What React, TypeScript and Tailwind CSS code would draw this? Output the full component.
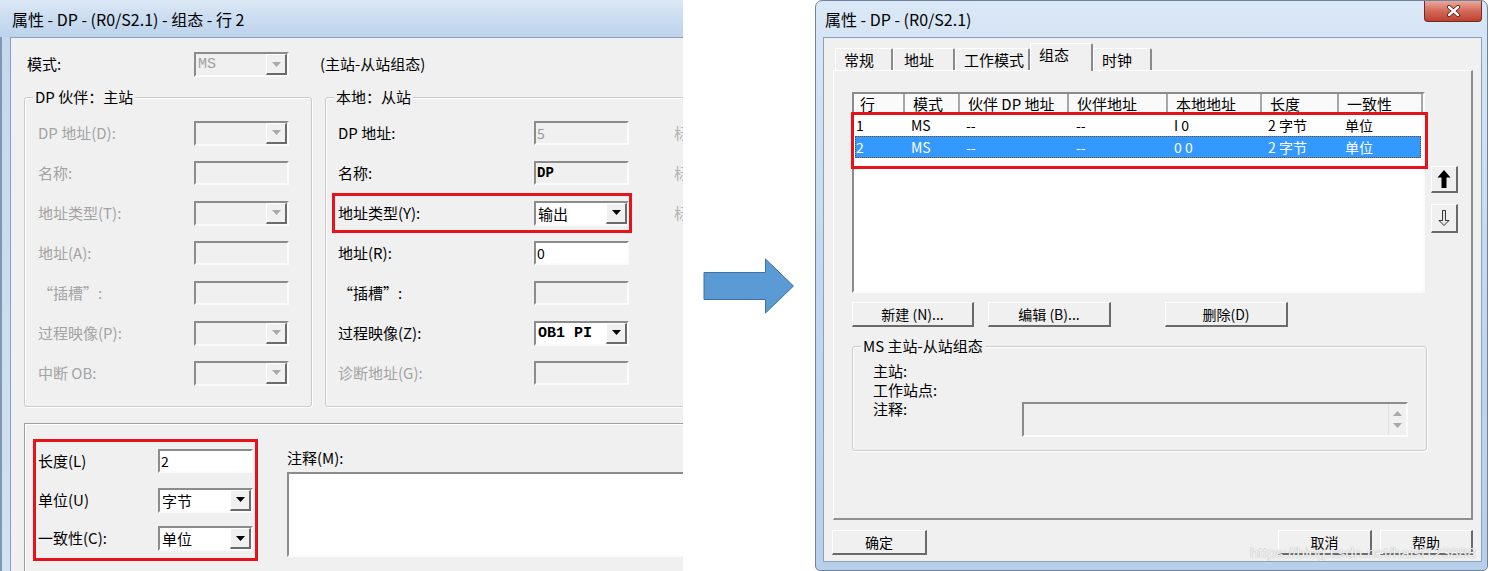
import clsx from 'clsx';

interface Field {
  label: string;
  kind: 'edit' | 'combo';
  value?: string;
  on?: boolean;
  mono?: boolean;
  dimText?: boolean;
  mark?: boolean;
  side?: boolean;
  dimLabel?: boolean;
}

const sunken =
  'border-2 border-t-[#8c8c8c] border-l-[#8c8c8c] border-r-[#fbfbfb] border-b-[#fbfbfb]';
const raised =
  'border-t border-l border-r-2 border-b-2 border-t-white border-l-white border-r-[#6a6a6a] border-b-[#6a6a6a] bg-[#f0f0f0]';
const red = 'border-[#e5141b]';

const partnerFields: Field[] = [
  { label: 'DP 地址(D):', kind: 'combo' },
  { label: '名称:', kind: 'edit' },
  { label: '地址类型(T):', kind: 'combo' },
  { label: '地址(A):', kind: 'edit' },
  { label: '“插槽”:', kind: 'edit' },
  { label: '过程映像(P):', kind: 'combo' },
  { label: '中断 OB:', kind: 'combo' },
];

const localFields: Field[] = [
  { label: 'DP 地址:', kind: 'edit', value: '5', dimText: true, side: true },
  { label: '名称:', kind: 'edit', value: 'DP', mono: true, side: true },
  { label: '地址类型(Y):', kind: 'combo', value: '输出', on: true, mark: true, side: true },
  { label: '地址(R):', kind: 'edit', value: '0', on: true },
  { label: '“插槽”:', kind: 'edit' },
  { label: '过程映像(Z):', kind: 'combo', value: 'OB1 PI', on: true, mono: true },
  { label: '诊断地址(G):', kind: 'edit', dimLabel: true },
];

const columns = [
  { title: '行', head: 'w-[51px] pl-[6px]', cell: 'w-[48px] pl-[1px]' },
  { title: '模式', head: 'w-[55px] pl-[8px]', cell: 'w-[55px] pl-[8px]' },
  { title: '伙伴 DP 地址', head: 'w-[109px] pl-[8px]', cell: 'w-[109px] pl-[8px]' },
  { title: '伙伴地址', head: 'w-[99px] pl-[8px]', cell: 'w-[99px] pl-[9px]' },
  { title: '本地地址', head: 'w-[94px] pl-[8px]', cell: 'w-[94px] pl-[8px]' },
  { title: '长度', head: 'w-[77px] pl-[8px]', cell: 'w-[77px] pl-[8px]' },
  { title: '一致性', head: 'w-[84px] pl-[8px]', cell: 'w-[84px] pl-[8px]' },
];

const rows = [
  ['1', 'MS', '--', '--', 'I 0', '2 字节', '单位'],
  ['2', 'MS', '--', '--', '0 0', '2 字节', '单位'],
];

const tabs = [
  { name: '常规', w: 'w-[58px]' },
  { name: '地址', w: 'w-[62px] pl-[10px]' },
  { name: '工作模式', w: 'w-[75px]' },
  { name: '组态', w: 'w-[63px]', active: true },
  { name: '时钟', w: 'w-[59px] pl-[5px]' },
];

function DropTri({ on }: { on?: boolean }) {
  return (
    <svg width="9" height="5" viewBox="0 0 9 5">
      <path d="M0 0H9L4.5 5Z" fill={on ? '#000' : '#a9a9a9'} />
    </svg>
  );
}

function Edit({ value, on, mono, dimText }: Partial<Field>) {
  return (
    <div
      className={clsx(
        'flex h-[24px] w-[95px] shrink-0 items-center pl-[1px] text-[14px] leading-none',
        sunken,
        on ? 'bg-white' : 'bg-[#f0f0f0]',
        dimText ? 'text-[#9a9a9a]' : 'text-black',
        mono && "font-bold [font-family:'Liberation_Mono',monospace]",
      )}
    >
      {value}
    </div>
  );
}

function Combo({ value, on, mono }: Partial<Field>) {
  return (
    <div
      className={clsx(
        'flex h-[25px] w-[95px] shrink-0 items-center',
        sunken,
        on ? 'bg-white' : 'bg-[#f0f0f0]',
      )}
    >
      <span
        className={clsx(
          'flex-1 pl-[2px] text-[15px] leading-none',
          on ? 'text-black' : 'text-[#a0a0a0]',
          mono && "text-[14px] [font-family:'Liberation_Mono',monospace]",
          mono && on && 'font-bold',
        )}
      >
        {value}
      </span>
      <span className={clsx('flex h-full w-[21px] items-center justify-center', raised)}>
        <DropTri on={on} />
      </span>
    </div>
  );
}

function Control(props: Field) {
  return props.kind === 'combo' ? <Combo {...props} /> : <Edit {...props} />;
}

function GroupBox({
  title,
  className,
  children,
}: {
  title: string;
  className: string;
  children?: React.ReactNode;
}) {
  return (
    <div
      className={clsx(
        'relative shrink-0 rounded-[3px] border border-[#cbcbcb] shadow-[inset_1px_1px_0_#fff,1px_1px_0_#fff]',
        className,
      )}
    >
      <span className="absolute -top-[11px] left-[8px] bg-[#f0f0f0] px-[2px] text-[15px] leading-[20px]">
        {title}
      </span>
      {children}
    </div>
  );
}

function Button({ label, className }: { label: string; className: string }) {
  return (
    <div
      className={clsx(
        'flex h-[25px] shrink-0 items-center justify-center text-[14px]',
        raised,
        className,
      )}
    >
      {label}
    </div>
  );
}

function LeftDialog() {
  return (
    <div className="flex h-[571px] w-[683px] shrink-0 flex-col overflow-hidden">
      <div className="flex h-[37px] shrink-0 items-center bg-gradient-to-b from-[#dde9f6] via-[#cadcf0] to-[#bdd4ed] pl-[12px] text-[16px]">
        属性 - DP - (R0/S2.1) - 组态 - 行 2
      </div>
      <div className="flex min-h-0 flex-1">
        <div className="w-[10px] shrink-0 border-l-2 border-[#8196b0] bg-gradient-to-b from-[#c4d8ee] to-[#d3e2f2]" />
        <div className="w-[760px] shrink-0 border-l border-t border-[#8aa0bb] bg-[#f0f0f0] pl-[13px]">
          <div className="mt-[14px] flex h-[25px] items-center text-[15px]">
            <span className="w-[170px] pl-[3px]">模式:</span>
            <Combo value="MS" mono />
            <span className="ml-[31px]">(主站-从站组态)</span>
          </div>

          <div className="mt-[20px] flex text-[15px]">
            <GroupBox title="DP 伙伴：主站" className="h-[310px] w-[288px]">
              <div className="pt-[15px]">
                {partnerFields.map((f) => (
                  <div key={f.label} className="flex h-[40px] items-center pl-[13px]">
                    <span className="w-[156px] text-[#a3a3a3]">{f.label}</span>
                    <Control {...f} />
                  </div>
                ))}
              </div>
            </GroupBox>
            <GroupBox title="本地：从站" className="ml-[13px] h-[310px] w-[420px]">
              <div className="pt-[15px]">
                {localFields.map((f) => (
                  <div key={f.label} className="flex h-[40px] items-center">
                    <div
                      className={clsx(
                        'ml-[6px] flex h-[40px] w-[300px] items-center border-[3px] pl-[3px]',
                        f.mark ? red : 'border-transparent',
                      )}
                    >
                      <span className={clsx('w-[196px]', f.dimLabel && 'text-[#a3a3a3]')}>
                        {f.label}
                      </span>
                      <Control {...f} />
                    </div>
                    {f.side && <span className="ml-[42px] text-[#b4b4b4]">标</span>}
                  </div>
                ))}
              </div>
            </GroupBox>
          </div>

          {/* lower panel */}
          <div className="mt-[16px] flex h-[148px] w-[740px] border-l border-t border-[#a0a0a0] pl-[8px] pt-[15px] text-[15px] shadow-[inset_1px_1px_0_#fff]">
            <div className={clsx('flex h-[122px] w-[225px] flex-col border-[3px] pl-[2px]', red)}>
              <div className="flex h-[39px] items-center">
                <span className="w-[120px]">长度(L)</span>
                <Edit value="2" on />
              </div>
              <div className="flex h-[39px] items-center">
                <span className="w-[120px]">单位(U)</span>
                <Combo value="字节" on />
              </div>
              <div className="flex h-[39px] items-center">
                <span className="w-[120px]">一致性(C):</span>
                <Combo value="单位" on />
              </div>
            </div>
            <div className="ml-[29px] pt-[9px]">
              <div className="h-[20px] leading-[20px]">注释(M):</div>
              <div className={clsx('mt-[4px] h-[85px] w-[440px] bg-white', sunken)} />
            </div>
          </div>
        </div>
      </div>
    </div>
  );
}

function RightDialog() {
  return (
    <div className="flex h-[571px] w-[673px] shrink-0 flex-col overflow-hidden rounded-t-[7px] rounded-b-[5px] border border-[#6e839c] bg-gradient-to-b from-[#d9e7f6] via-[#c3d8ee] to-[#b7cfea]">
      <div className="flex h-[36px] shrink-0 justify-between">
        <span className="flex items-center pl-[9px] text-[16px]">属性 - DP - (R0/S2.1)</span>
        <div className="mr-[5px] flex h-[21px] w-[58px] items-center justify-center rounded-b-[4px] border border-t-0 border-[#6e2c22] bg-gradient-to-b from-[#e9a99c] via-[#d3695a] to-[#c0402d]">
          <svg width="15" height="12" viewBox="0 0 15 12">
            <path d="M3 2L12 10M12 2L3 10" stroke="#4e1a12" strokeWidth="4" strokeLinecap="round" />
            <path d="M3 2L12 10M12 2L3 10" stroke="#fff" strokeWidth="2.4" strokeLinecap="round" />
          </svg>
        </div>
      </div>
      <div className="flex min-h-0 flex-1">
        <div className="w-[7px] shrink-0" />
        <div className="h-[525px] w-[659px] shrink-0 border border-[#8aa0bb] bg-[#f0f0f0] text-[15px]">
          {/* tabs */}
          <div className="mt-[5px] flex h-[27px] items-end pl-[11px]">
            {tabs.map((t) => (
              <div
                key={t.name}
                className={clsx(
                  'flex shrink-0 items-start rounded-t-[2px] border-l border-t border-r-2 border-l-white border-t-white border-r-[#8a8a8a] bg-[#f0f0f0] pl-[8px] pt-[1px] leading-[20px]',
                  t.w,
                  t.active ? 'relative z-10 -mb-[1px] h-[28px]' : 'h-[22px]',
                )}
              >
                {t.name}
              </div>
            ))}
          </div>

          <div className="ml-[9px] h-[450px] w-[640px] border-l border-t border-r-2 border-b-2 border-l-white border-t-white border-r-[#8f8f8f] border-b-[#8f8f8f] pl-[18px] pt-[21px]">
            <div className="flex">
              <div className={clsx('relative h-[201px] w-[573px] shrink-0 bg-white', sunken)}>
                <div className="flex h-[20px]">
                  {columns.map((c) => (
                    <div
                      key={c.title}
                      className={clsx(
                        'flex h-full shrink-0 items-center border-r-2 border-b border-r-[#a7a7a7] border-b-[#d0d0d0] bg-[#fafafa] leading-none',
                        c.head,
                      )}
                    >
                      {c.title}
                    </div>
                  ))}
                </div>
                {rows.map((r, i) => (
                  <div
                    key={i}
                    className={clsx(
                      'ml-[1px] flex h-[22px] w-[566px] items-center',
                      i === 1 &&
                        'bg-[#3399ff] text-white outline-1 outline-dotted outline-[#7a4a1c] -outline-offset-1',
                    )}
                  >
                    {r.map((v, j) => (
                      <span key={j} className={clsx('shrink-0 text-[14px]', columns[j].cell)}>
                        {v}
                      </span>
                    ))}
                  </div>
                ))}
                <div
                  className={clsx(
                    'absolute -left-[3px] top-[18px] h-[57px] w-[577px] border-[3px]',
                    red,
                  )}
                />
              </div>
              <div className="ml-[6px] flex flex-col pt-[74px]">
                <div className={clsx('flex h-[27px] w-[27px] items-center justify-center', raised)}>
                  <svg width="14" height="18" viewBox="0 0 14 18">
                    <path d="M7 0L13.5 7.5H9.5V18H4.5V7.5H0.5Z" fill="#000" />
                  </svg>
                </div>
                <div
                  className={clsx('mt-[11px] flex h-[29px] w-[27px] items-center justify-center', raised)}
                >
                  <svg width="12" height="16" viewBox="0 0 12 16">
                    <path
                      d="M4.5 0.5H7.5V10.5H11L6 15.5L1 10.5H4.5Z"
                      fill="#e6e6e6"
                      stroke="#333"
                      strokeWidth="1"
                    />
                  </svg>
                </div>
              </div>
            </div>

            <div className="mt-[9px] flex">
              <Button label="新建 (N)..." className="w-[122px]" />
              <Button label="编辑 (B)..." className="ml-[14px] w-[123px]" />
              <Button label="删除(D)" className="ml-[54px] w-[123px]" />
            </div>

            <GroupBox title="MS 主站-从站组态" className="mt-[19px] h-[105px] w-[575px]">
              <div className="pl-[20px] pt-[14px] leading-[19px]">
                <div>主站:</div>
                <div>工作站点:</div>
                <div className="flex items-start">
                  <span className="w-[149px] shrink-0">注释:</span>
                  <div className={clsx('mt-[3px] flex h-[35px] w-[386px] justify-end bg-[#f0f0f0]', sunken)}>
                    <div className="flex w-[18px] flex-col items-center justify-center gap-[7px] border-l border-[#e2e2e2]">
                      <svg width="9" height="5" viewBox="0 0 9 5">
                        <path d="M0 5H9L4.5 0Z" fill="#a9a9a9" />
                      </svg>
                      <DropTri />
                    </div>
                  </div>
                </div>
              </div>
            </GroupBox>
          </div>

          <div className="mt-[10px] flex pl-[8px]">
            <Button label="确定" className="w-[95px]" />
            <Button label="取消" className="ml-[351px] w-[94px]" />
            <Button label="帮助" className="ml-[8px] w-[93px]" />
          </div>
        </div>
        <div className="w-[5px] shrink-0" />
      </div>
    </div>
  );
}

export default function App() {
  return (
    <div className="relative flex h-[571px] w-[1493px] overflow-hidden bg-white text-black [font-family:'Noto_Sans_CJK_SC','Noto_Sans',sans-serif]">
      <LeftDialog />
      <div className="w-[132px] shrink-0 pl-[20px] pt-[258px]">
        <svg width="92" height="56" viewBox="0 0 92 56">
          <path d="M1 14.5H62.5V1L90.5 28L62.5 55V41.5H1Z" fill="#5b9bd5" stroke="#41719c" strokeWidth="1" />
        </svg>
      </div>
      <RightDialog />
      <span className="absolute left-[1250px] top-[542px] text-[15px] tracking-[0.2px] text-white/90 [font-family:'Liberation_Sans',sans-serif] [text-shadow:0_0_1px_#8a8a8a]">
        https://blog.csdn.net/haisl123888
      </span>
    </div>
  );
}
